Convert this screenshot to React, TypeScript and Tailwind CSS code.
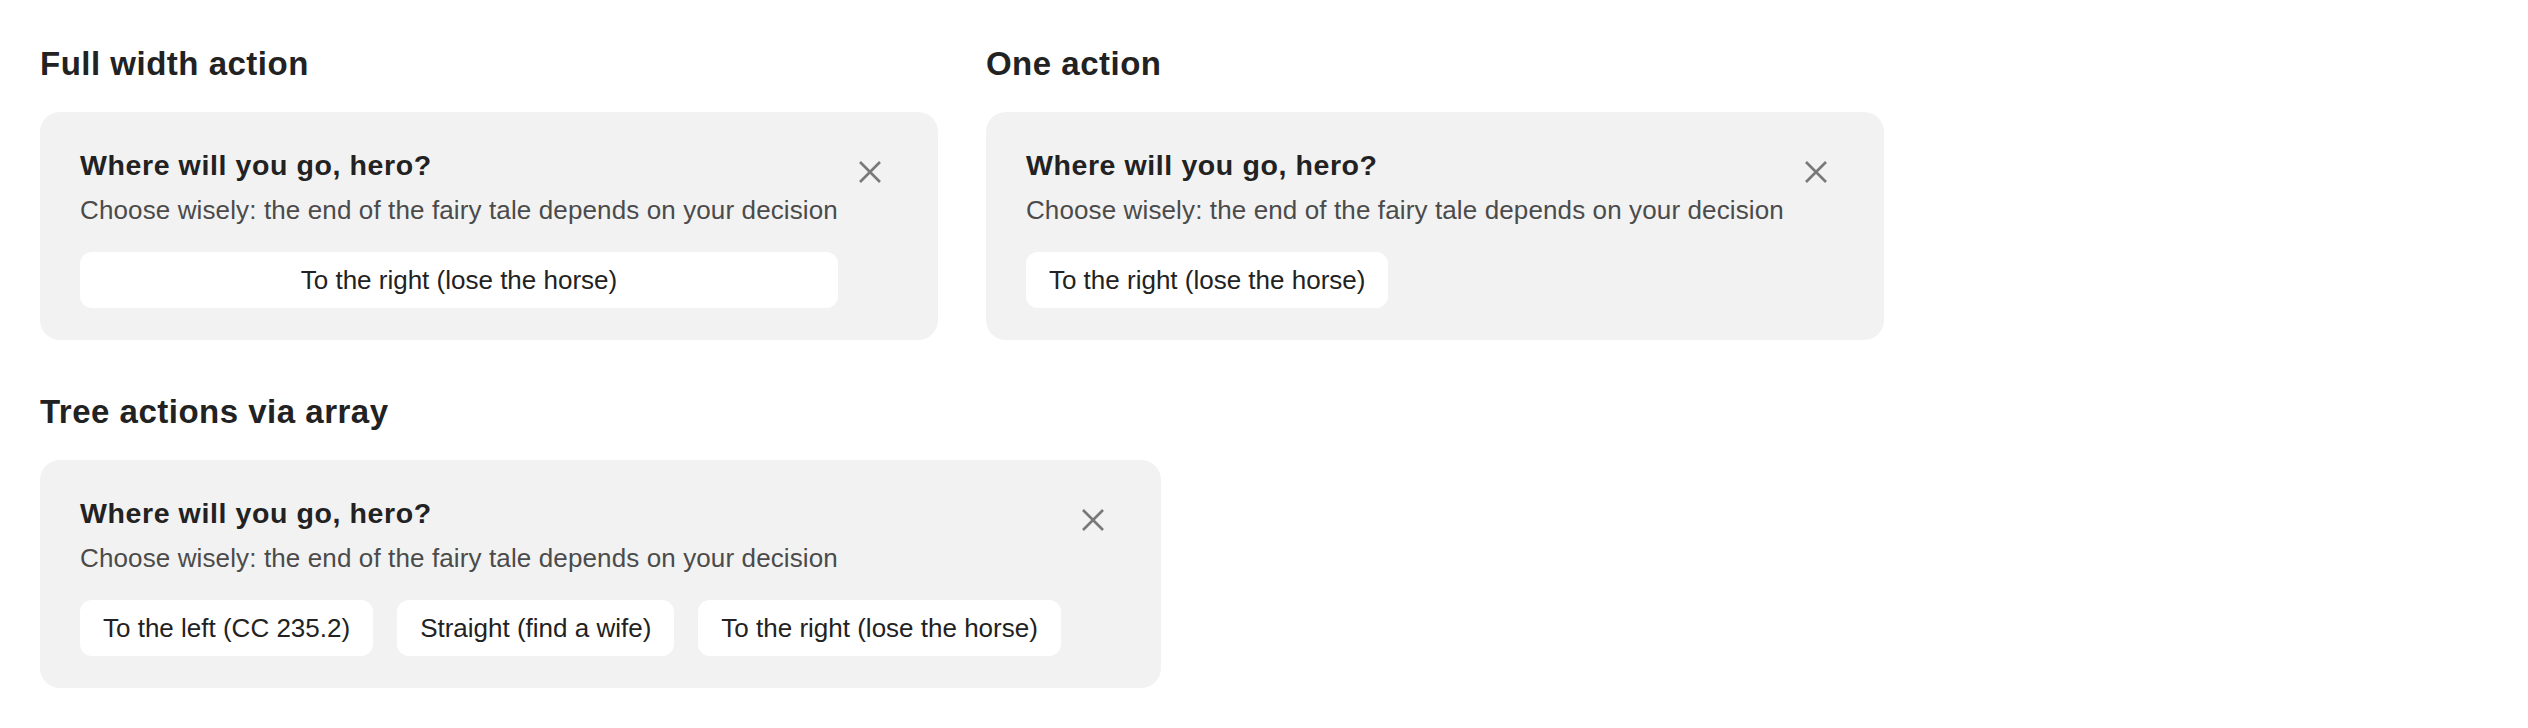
import React from 'react';

type Action = { label: string };

function CloseIcon() {
  return (
    <svg width="22" height="22" viewBox="0 0 22 22" fill="none">
      <path d="M1 1L21 21M21 1L1 21" stroke="#787878" strokeWidth="2.6" strokeLinecap="butt" />
    </svg>
  );
}

function Notice({ actions, fullWidth = false }: { actions: Action[]; fullWidth?: boolean }) {
  return (
    <div className="inline-flex items-start rounded-[20px] bg-[#f2f2f2] pt-8 pb-8 pl-10 pr-10">
      <div className="flex flex-col">
        <h3 className="text-[28.5px] leading-[42px] font-bold tracking-[0.6px] text-[#222]">Where will you go, hero?</h3>
        <p className="mt-1 text-[26px] leading-[40px] tracking-[0.12px] text-[#4b4b4b]">
          Choose wisely: the end of the fairy tale depends on your decision
        </p>
        <div className="mt-[22px] flex gap-6">
          {actions.map((a) => (
            <button
              key={a.label}
              className={`h-14 rounded-xl bg-white px-[23px] text-[26px] leading-[56px] text-[#222] whitespace-nowrap ${fullWidth ? 'w-full' : ''}`}
            >
              {a.label}
            </button>
          ))}
        </div>
      </div>
      <button className="ml-1 flex h-14 w-14 shrink-0 items-center justify-center">
        <CloseIcon />
      </button>
    </div>
  );
}

function Section({ title, children }: { title: string; children: React.ReactNode }) {
  return (
    <section className="flex flex-col items-start">
      <h2 className="mb-6 text-[33px] leading-[48px] font-bold tracking-[0.5px] text-[#222]">{title}</h2>
      {children}
    </section>
  );
}

export default function App() {
  const right = { label: 'To the right (lose the horse)' };

  return (
    <div className="min-h-screen bg-white p-10 font-['Liberation_Sans',Arial,sans-serif]">
      <div className="flex gap-12">
        <Section title="Full width action">
          <Notice actions={[right]} fullWidth />
        </Section>
        <Section title="One action">
          <Notice actions={[right]} />
        </Section>
      </div>

      <div className="mt-12">
        <Section title="Tree actions via array">
          <Notice
            actions={[
              { label: 'To the left (CC 235.2)' },
              { label: 'Straight (find a wife)' },
              right,
            ]}
          />
        </Section>
      </div>
    </div>
  );
}
